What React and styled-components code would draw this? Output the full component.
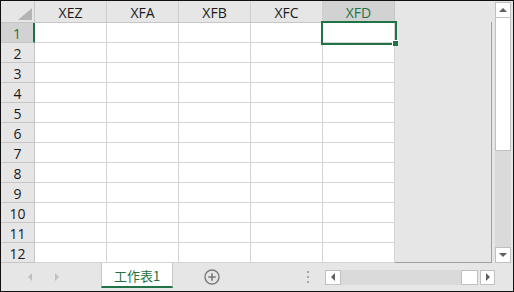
import React from 'react';
import styled, { createGlobalStyle } from 'styled-components';

const GlobalStyle = createGlobalStyle`
  * { box-sizing: border-box; }
  body {
    margin: 0;
    background: #fff;
    font-family: "Open Sans", "Noto Sans", sans-serif;
  }
`;

const GREEN = '#217346';
const COLUMNS = ['XEZ', 'XFA', 'XFB', 'XFC', 'XFD'];
const ROWS = [1, 2, 3, 4, 5, 6, 7, 8, 9, 10, 11, 12];

const Frame = styled.div`
  width: 514px;
  height: 292px;
  border: 1px solid #111;
  background: #e6e6e6;
  display: flex;
  flex-direction: column;
`;

const Top = styled.div`
  display: flex;
  height: 262px;
`;

const Sheet = styled.div`
  position: relative;
  display: grid;
  grid-template-columns: 34px repeat(5, 72px);
  grid-template-rows: 22px repeat(12, 20px);
  width: 394px;
  background: #fff;
`;

const Corner = styled.div`
  background: #e6e6e6;
  border-right: 1px solid #c6c6c6;
  border-bottom: 1px solid #c6c6c6;
  display: flex;
  align-items: flex-end;
  justify-content: flex-end;
  padding: 0 2px 2px 0;
`;

const ColHead = styled.div`
  background: ${p => (p.$active ? '#d2d2d2' : '#e6e6e6')};
  color: ${p => (p.$active ? GREEN : '#1a1a1a')};
  border-right: 1px solid ${p => (p.$active ? '#c6c6c6' : '#d0d0d0')};
  border-bottom: 1px solid #c6c6c6;
  font-size: 14px;
  display: flex;
  align-items: center;
  justify-content: center;
  padding-top: 1px;
`;

const RowHead = styled.div`
  background: ${p => (p.$active ? '#d2d2d2' : '#e6e6e6')};
  color: ${p => (p.$active ? GREEN : '#1a1a1a')};
  border-right: ${p => (p.$active ? `2px solid ${GREEN}` : '1px solid #c6c6c6')};
  border-bottom: 1px solid #c6c6c6;
  font-size: 14px;
  display: flex;
  align-items: center;
  justify-content: center;
  padding-top: 1px;
`;

const Cell = styled.div`
  border-right: 1px solid #d4d4d4;
  border-bottom: 1px solid #d4d4d4;
`;

const Selection = styled.div`
  position: absolute;
  left: 320px;
  top: 20px;
  width: 76px;
  height: 24px;
  border: 2px solid ${GREEN};
  pointer-events: none;
`;

const FillHandle = styled.div`
  position: absolute;
  right: -3px;
  bottom: -3px;
  width: 6px;
  height: 6px;
  background: ${GREEN};
  border: 1px solid #fff;
  border-right: none;
  border-bottom: none;
`;

const Filler = styled.div`
  flex: 1;
  display: flex;
  flex-direction: column;
  padding: 21px 3px 0 0;
`;

const FillerFrame = styled.div`
  flex: 1;
  border-right: 1px solid #a0a0a0;
  border-bottom: 1px solid #a0a0a0;
`;

const VScroll = styled.div`
  width: 18px;
  display: flex;
  flex-direction: column;
  padding: 1px 2px 0 0;
`;

const ScrollButton = styled.div`
  width: ${p => p.$w || 16}px;
  height: ${p => p.$h || 16}px;
  flex-shrink: 0;
  background: #fff;
  border: 1px solid #c0c0c0;
  display: flex;
  align-items: center;
  justify-content: center;
`;

const VThumb = styled.div`
  height: 133px;
  background: #fff;
  border: 1px solid #c0c0c0;
  border-top: none;
`;

const VTrack = styled.div`
  flex: 1;
  background: #dadada;
`;

const Bottom = styled.div`
  height: 28px;
  display: flex;
  align-items: center;
`;

const Nav = styled.div`
  width: 100px;
  display: flex;
  gap: 23px;
  padding-left: 27px;
`;

const Tab = styled.div`
  align-self: flex-start;
  width: 72px;
  height: 25px;
  background: #fff;
  border-left: 1px solid #c6c6c6;
  border-right: 1px solid #c6c6c6;
  border-bottom: 2px solid ${GREEN};
  color: ${GREEN};
  font-family: "Noto Sans CJK TC", "Noto Sans CJK SC", sans-serif;
  font-size: 13px;
  display: flex;
  align-items: center;
  justify-content: center;
  padding-top: 1px;
`;

const AddSheet = styled.svg`
  margin-left: 31px;
  flex-shrink: 0;
`;

const Splitter = styled.div`
  margin-left: 87px;
  width: 2px;
  height: 12px;
  display: flex;
  flex-direction: column;
  justify-content: space-between;
  span {
    display: block;
    width: 2px;
    height: 2px;
    background: #a6a6a6;
  }
`;

const HScroll = styled.div`
  margin-left: 16px;
  display: flex;
  align-items: center;
  height: 15px;
`;

const HTrack = styled.div`
  width: 120px;
  height: 15px;
  background: #dadada;
`;

const HThumb = styled.div`
  width: 17px;
  height: 15px;
  background: #fff;
  border: 1px solid #c0c0c0;
  margin-right: 2px;
`;

const Arrow = ({ dir, color = '#606060' }) => {
  const pts = {
    up: '0,4 4,0 8,4',
    down: '0,0 8,0 4,4',
    left: '4,0 4,8 0,4',
    right: '0,0 0,8 4,4',
  }[dir];
  const vertical = dir === 'up' || dir === 'down';
  return (
    <svg width={vertical ? 8 : 4} height={vertical ? 4 : 8} viewBox={vertical ? '0 0 8 4' : '0 0 4 8'}>
      <polygon points={pts} fill={color} />
    </svg>
  );
};

export default function App() {
  return (
    <>
      <GlobalStyle />
      <Frame>
        <Top>
          <Sheet>
            <Corner>
              <svg width="14" height="12" viewBox="0 0 14 12">
                <polygon points="14,0 14,12 0,12" fill="#b4b4b4" />
              </svg>
            </Corner>
            {COLUMNS.map(c => (
              <ColHead key={c} $active={c === 'XFD'}>{c}</ColHead>
            ))}
            {ROWS.map(r => (
              <React.Fragment key={r}>
                <RowHead $active={r === 1}>{r}</RowHead>
                {COLUMNS.map(c => <Cell key={c} />)}
              </React.Fragment>
            ))}
            <Selection>
              <FillHandle />
            </Selection>
          </Sheet>
          <Filler>
            <FillerFrame />
          </Filler>
          <VScroll>
            <ScrollButton><Arrow dir="up" /></ScrollButton>
            <VThumb />
            <VTrack />
            <ScrollButton><Arrow dir="down" /></ScrollButton>
          </VScroll>
        </Top>
        <Bottom>
          <Nav>
            <Arrow dir="left" color="#c0c0c0" />
            <Arrow dir="right" color="#c0c0c0" />
          </Nav>
          <Tab>工作表1</Tab>
          <AddSheet width="16" height="16" viewBox="0 0 16 16">
            <circle cx="8" cy="8" r="7" fill="none" stroke="#7a7a7a" strokeWidth="1.4" />
            <path d="M8 4.2v7.6M4.2 8h7.6" stroke="#7a7a7a" strokeWidth="1.6" />
          </AddSheet>
          <Splitter><span /><span /><span /></Splitter>
          <HScroll>
            <ScrollButton $w={16} $h={15}><Arrow dir="left" /></ScrollButton>
            <HTrack />
            <HThumb />
            <ScrollButton $w={15} $h={15}><Arrow dir="right" /></ScrollButton>
          </HScroll>
        </Bottom>
      </Frame>
    </>
  );
}
